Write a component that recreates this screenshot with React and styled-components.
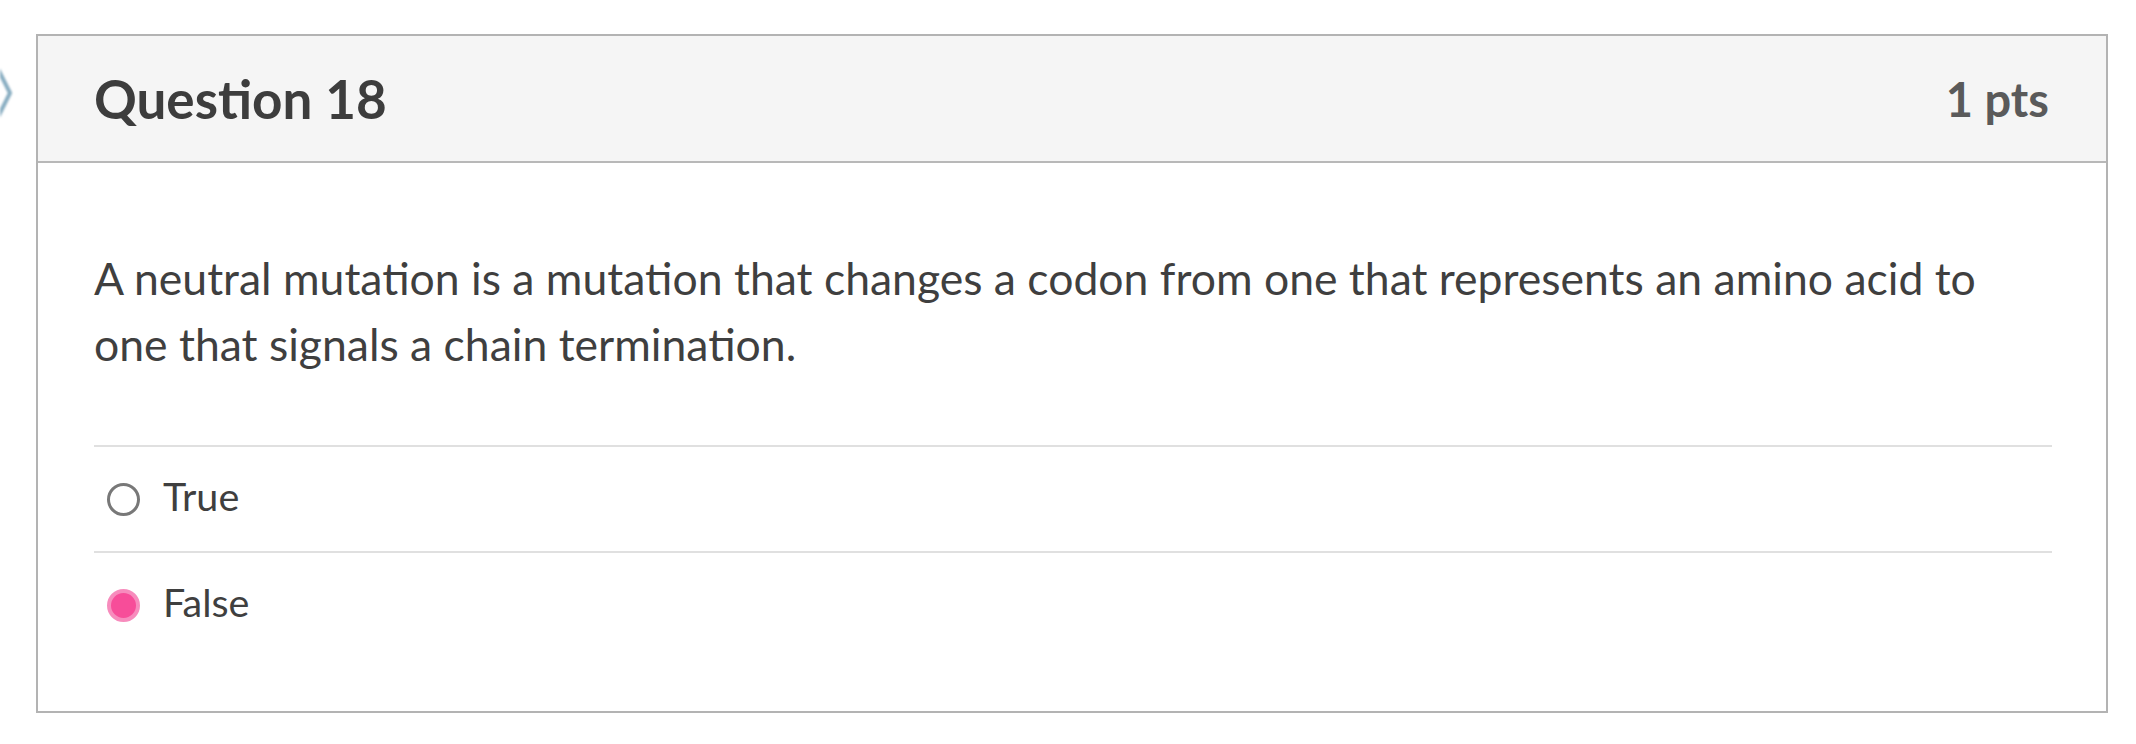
import styled, { createGlobalStyle } from 'styled-components';

const GlobalStyle = createGlobalStyle`
  html, body {
    margin: 0;
    padding: 0;
    background: #ffffff;
  }
  body {
    font-family: Lato, "Noto Sans", "Liberation Sans", sans-serif;
    color: #3d3d3d;
  }
`;

const answers = [
  { id: 'true', label: 'True', checked: false },
  { id: 'false', label: 'False', checked: true },
];

const App = () => {
  return (
    <>
      <GlobalStyle />
      <Page>
        <Marker>
          <svg width="14" height="66" viewBox="0 0 14 66">
            <path
              d="M-6 1 L10 33 L-6 65"
              fill="none"
              stroke="#6a98b1"
              strokeWidth="4"
              strokeLinejoin="round"
              opacity="0.8"
            />
          </svg>
        </Marker>
        <Card>
          <Header>
            <Title>Question 18</Title>
            <Points>1 pts</Points>
          </Header>
          <Body>
            <QuestionText>
              A neutral mutation is a mutation that changes a codon from one that represents an amino acid to
              one that signals a chain termination.
            </QuestionText>
            <AnswerList>
              {answers.map((a) => (
                <AnswerRow key={a.id}>
                  <Radio $checked={a.checked} />
                  <AnswerLabel>{a.label}</AnswerLabel>
                </AnswerRow>
              ))}
            </AnswerList>
          </Body>
        </Card>
      </Page>
    </>
  );
};

export default App;

const Page = styled.div`
  position: relative;
  padding: 34px 28px 0 36px;
`;

const Marker = styled.div`
  position: absolute;
  left: 0;
  top: 60px;
  filter: blur(0.8px);
`;

const Card = styled.div`
  width: 2072px;
  height: 679px;
  box-sizing: border-box;
  border: 2px solid #b3b3b3;
  background: #ffffff;
  display: flex;
  flex-direction: column;
`;

const Header = styled.div`
  height: 127px;
  box-sizing: border-box;
  background: #f5f5f5;
  border-bottom: 2px solid #b8b8b8;
  display: flex;
  align-items: center;
  justify-content: space-between;
  padding: 0 57px 0 56px;
`;

const Title = styled.h2`
  margin: 0;
  font-family: Lato, "Noto Sans", sans-serif;
  font-weight: 700;
  font-size: 53px;
  color: #3d3d3d;
`;

const Points = styled.div`
  font-family: Lato, "Noto Sans", sans-serif;
  font-weight: 700;
  font-size: 47px;
  color: #5a5a5a;
`;

const Body = styled.div`
  padding: 82px 54px 0 56px;
`;

const QuestionText = styled.p`
  margin: 0 0 68px;
  font-size: 44.5px;
  line-height: 66px;
  color: #3f3f3f;
`;

const AnswerList = styled.div`
  display: flex;
  flex-direction: column;
`;

const AnswerRow = styled.div`
  height: 106px;
  box-sizing: border-box;
  border-top: 2px solid #e0e0e0;
  display: flex;
  align-items: center;
  padding-left: 13px;
  gap: 23px;
`;

const Radio = styled.span`
  width: 33px;
  height: 33px;
  box-sizing: border-box;
  border-radius: 50%;
  flex-shrink: 0;
  border: ${(p) => (p.$checked ? '4px solid #f78cbd' : '3px solid #787878')};
  background: ${(p) => (p.$checked ? '#f74d99' : '#ffffff')};
`;

const AnswerLabel = styled.span`
  font-size: 39.5px;
  line-height: 48px;
  margin-bottom: 7px;
  color: #3f3f3f;
`;
